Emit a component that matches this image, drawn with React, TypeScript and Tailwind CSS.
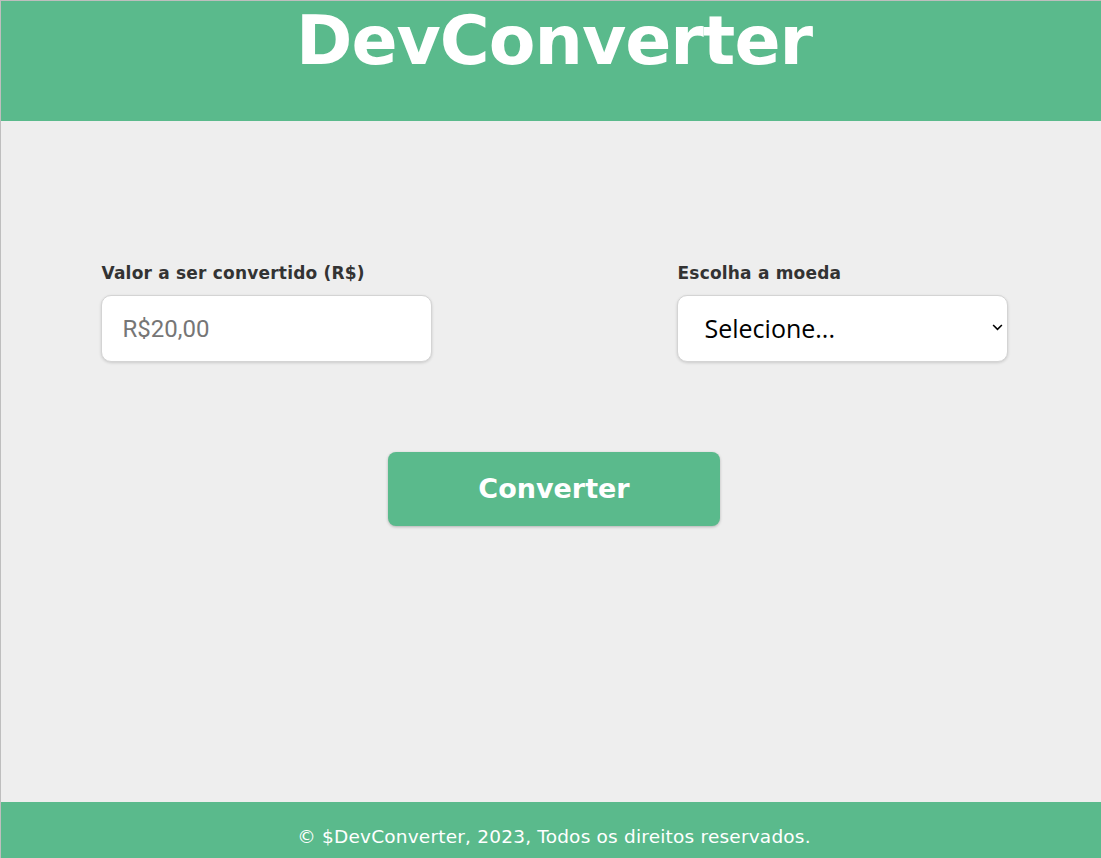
export default function App() {
  return (
    <div className="flex min-h-screen flex-col border-l border-t border-black/20 bg-[#eeeeee] font-['DejaVu_Sans',sans-serif]">
      <header className="flex h-[120px] justify-center bg-[#5aba8c] pl-[6px]">
        <h1 className="text-[68px] font-bold leading-[80px] tracking-[-1px] text-white">
          DevConverter
        </h1>
      </header>

      <main className="flex flex-1 flex-col items-center pl-[6px]">
        <div className="mt-[140px] flex w-[907px] justify-between">
          <div className="flex w-[331px] flex-col">
            <label className="mb-[10px] pl-[1px] text-[17px] font-bold leading-[24px] tracking-[0.2px] text-[#333333]">
              Valor a ser convertido (R$)
            </label>
            <input
              type="text"
              placeholder="R$20,00"
              className="h-[67px] w-full rounded-[10px] border border-[#d4d4d4] bg-white px-[21px] font-['Roboto',sans-serif] text-[24px] shadow-[0_1px_3px_rgba(0,0,0,0.15)] outline-none placeholder:text-[#767676]"
            />
          </div>
          <div className="flex w-[331px] flex-col">
            <label className="mb-[10px] pl-[1px] text-[17px] font-bold leading-[24px] tracking-[0.2px] text-[#333333]">
              Escolha a moeda
            </label>
            <div className="relative">
              <select className="h-[67px] w-full appearance-none rounded-[10px] border border-[#d4d4d4] bg-white px-[27px] font-['Open_Sans',sans-serif] text-[25px] font-medium text-black shadow-[0_1px_3px_rgba(0,0,0,0.15)] outline-none">
                <option>Selecione...</option>
              </select>
              <svg
                viewBox="0 0 12 8"
                className="pointer-events-none absolute right-[5px] top-[29px] h-[7px] w-[11px]"
                fill="none"
                stroke="black"
                strokeWidth="1.8"
              >
                <path d="M1 1.2l5 5 5-5" />
              </svg>
            </div>
          </div>
        </div>

        <button className="mt-[90px] h-[74px] w-[332px] rounded-[8px] bg-[#5aba8c] text-[27px] font-bold text-white shadow-[0_1px_3px_rgba(0,0,0,0.25)]">
          Converter
        </button>
      </main>

      <footer className="flex h-[56px] items-end justify-center bg-[#5aba8c] pb-[9px] pl-[6px]">
        <p className="text-[18.5px] leading-[24px] tracking-[0.2px] text-white">
          © $DevConverter, 2023, Todos os direitos reservados.
        </p>
      </footer>
    </div>
  );
}
